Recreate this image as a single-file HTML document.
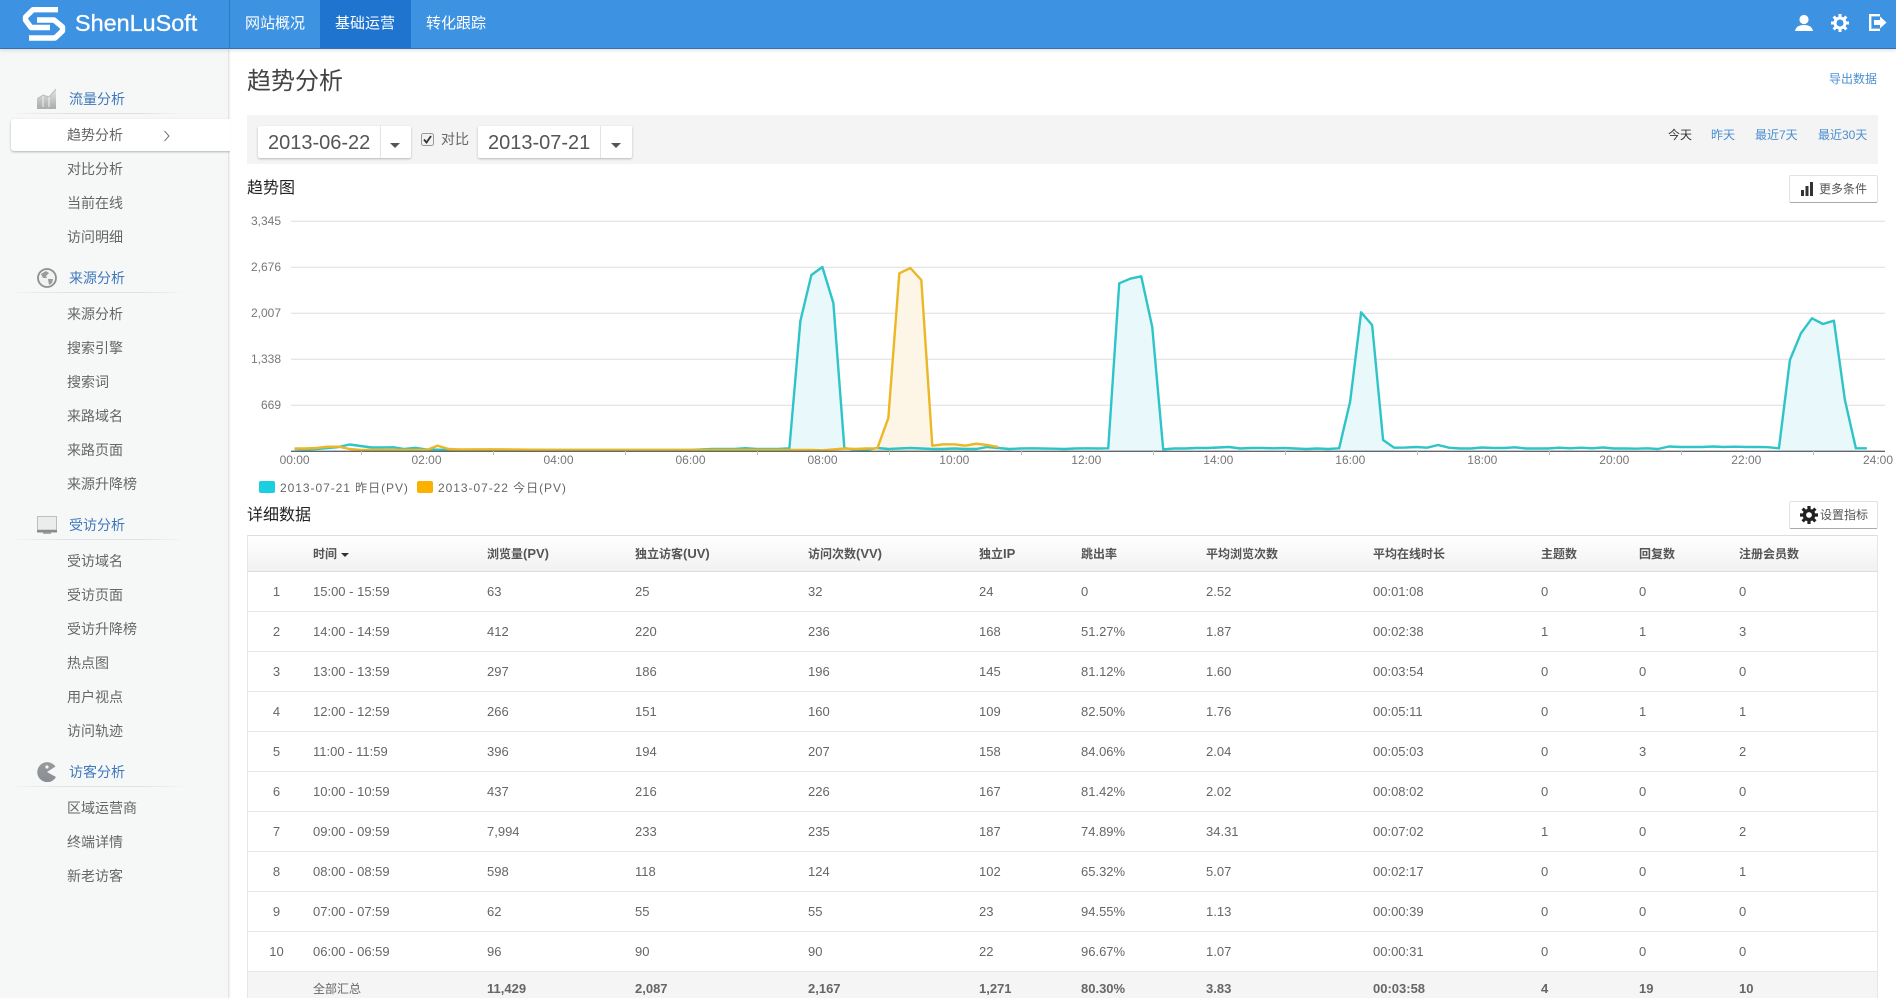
<!DOCTYPE html>
<html lang="zh-CN">
<head>
<meta charset="utf-8">
<title>趋势分析</title>
<style>
*{box-sizing:border-box}
html,body{margin:0;padding:0;width:1896px;height:998px;overflow:hidden;background:#fff}
body{position:relative;font-family:"Liberation Sans","Noto Sans CJK SC",sans-serif;color:#555;font-size:12px}
.t{position:absolute;white-space:nowrap;line-height:20px}
a{color:inherit;text-decoration:none}
#hd{position:absolute;left:0;top:0;width:1896px;height:49px;background:#3d92e2;border-bottom:1px solid #2f70b8;box-shadow:0 1px 4px rgba(0,0,0,.15);z-index:3}
#hd .sep{position:absolute;left:229px;top:0;width:1px;height:48px;background:#2f78c4}
#hd .act{position:absolute;left:320px;top:0;width:91px;height:48px;background:#1f74cf}
#hd .t{color:#fff;font-size:15px}
#side{position:absolute;left:0;top:49px;width:228px;height:949px;background:#f6f7f7;box-shadow:1px 0 2px rgba(0,0,0,.16)}
.sec{position:absolute;left:69px;font-size:14px;color:#3f78bd;line-height:20px;white-space:nowrap}
.ln{position:absolute;left:17px;width:165px;height:1px;background:linear-gradient(90deg,#f0f1f2,#dfe1e3 30%,#dfe1e3 75%,#f3f4f5)}
.it{position:absolute;left:67px;font-size:14px;color:#666;line-height:20px;white-space:nowrap}
#cur{position:absolute;left:11px;top:119px;width:219px;height:32px;background:#fff;border-radius:3px 0 0 3px;box-shadow:0 1px 2px rgba(0,0,0,.28);clip-path:inset(-3px 0 -3px -3px)}
.ic{position:absolute}
#bar{position:absolute;left:247px;top:115px;width:1631px;height:49px;background:#f4f4f4}
.dt{position:absolute;top:126px;height:32px;background:#fff;border-radius:2px;box-shadow:0 1px 2px rgba(0,0,0,.25);font-size:20px;color:#555;line-height:34px;padding-left:10px}
.dt i{position:absolute;top:0;width:1px;height:32px;background:#e4e4e4}
.dt b{position:absolute;top:17px;width:0;height:0;border-left:5px solid transparent;border-right:5px solid transparent;border-top:5px solid #555}
.blue{color:#4a8fd0}
.btn{position:absolute;left:1789px;width:89px;height:28px;background:#fff;border:1px solid #e2e2e2;border-bottom:1px solid #aaa;border-radius:2px}
table{position:absolute;left:247px;top:535px;width:1631px;border-collapse:separate;border-spacing:0;table-layout:fixed;font-size:13px;color:#666}
th{height:37px;padding:0;text-align:left;font-size:12px;font-weight:bold;color:#555;border-top:1px solid #ddd;border-bottom:1px solid #ddd;background:linear-gradient(#fff,#f1f1f1)}
th span{font-size:13px}
td{height:40px;padding:0;border-bottom:1px solid #e6e6e6}
tr>:first-child{border-left:1px solid #e6e6e6;text-align:center;padding-right:8px}
tr>:last-child{border-right:1px solid #e6e6e6}
tr.sum td{height:32px;background:#f5f5f5;font-weight:bold;border-bottom:0}
tr.sum td.c{font-size:12px;font-weight:normal}
.car{display:inline-block;width:0;height:0;border-left:4px solid transparent;border-right:4px solid transparent;border-top:4px solid #333;margin-left:4px;vertical-align:1px}
svg text{font-family:"Liberation Sans",sans-serif;font-size:12px;fill:#777}
</style>
</head>
<body>

<div id="hd">
  <svg class="ic" style="left:0;top:0" width="80" height="48" fill="none" stroke="#fff" stroke-width="5.4" stroke-linejoin="round">
    <path d="M58 9.7H33L25.5 17V20L31 27.5H50"/>
    <path d="M37 20H54L62.5 27V31L55 38H29"/>
  </svg>
  <div class="t" style="left:75px;top:11px;font-size:23.4px;line-height:24px;-webkit-text-stroke:.3px #fff">ShenLuSoft</div>
  <div class="sep"></div>
  <div class="act"></div>
  <div class="t" style="left:245px;top:14px">网站概况</div>
  <div class="t" style="left:335px;top:14px">基础运营</div>
  <div class="t" style="left:426px;top:14px">转化跟踪</div>
  <svg class="ic" style="left:1795px;top:14px" width="18" height="18" fill="#fff"><circle cx="9" cy="5.5" r="4.6"/><path d="M0 17C1 12 5 11 9 11S17 12 18 17Z"/></svg>
  <svg class="ic" style="left:1831px;top:14px" width="18" height="18"><circle cx="9" cy="9" r="5" fill="none" stroke="#fff" stroke-width="3"/><g stroke="#fff" stroke-width="3"><path d="M9 0V4M9 14V18M0 9H4M14 9H18M2.6 2.6L5.5 5.5M12.5 12.5L15.4 15.4M2.6 15.4L5.5 12.5M12.5 5.5L15.4 2.6"/></g></svg>
  <svg class="ic" style="left:1869px;top:14px" width="18" height="17"><path d="M11 1.2H1.2V15.8H11" fill="none" stroke="#fff" stroke-width="2.4"/><path d="M5 6H11V2.5L17.5 8.5L11 14.5V11H5Z" fill="#fff"/></svg>
</div>

<div id="side" style="top:49px"></div>
<div style="position:absolute;left:0;top:0;width:230px;height:998px;z-index:1">
  <svg class="ic" style="left:37px;top:88px" width="20" height="21">
    <defs><linearGradient id="g" x1="0" y1="0" x2="0" y2="1"><stop offset="0" stop-color="#e4e4e4"/><stop offset="1" stop-color="#b0b0b0"/></linearGradient></defs>
    <path d="M0 11L6 7L12 9L19 1V19H0Z" fill="url(#g)"/><path d="M0 11L6 7L12 9L19 1" fill="none" stroke="#bbb"/><path d="M0 20H19" stroke="#999" stroke-width="1.4"/><path d="M6 8V19M12 9V19" stroke="#f2f2f2"/>
  </svg>
  <div class="sec" style="top:89px">流量分析</div>
  <div class="ln" style="top:113px"></div>
  <div id="cur"></div>
  <div class="it" style="top:125px">趋势分析</div>
  <svg class="ic" style="left:163px;top:130px" width="8" height="12" fill="none" stroke="#777" stroke-width="1"><path d="M1.5 1L6 6L1.5 11"/></svg>
  <div class="it" style="top:159px">对比分析</div>
  <div class="it" style="top:193px">当前在线</div>
  <div class="it" style="top:227px">访问明细</div>

  <svg class="ic" style="left:37px;top:268px" width="20" height="20"><circle cx="10" cy="10" r="9" fill="#f1f1f1" stroke="#8f8f8f" stroke-width="1.8"/><path d="M4 6L9 3L12 5L9 8L10 10L6 10ZM11 11L16 11L15 15L12 17Z" fill="#9a9a9a"/></svg>
  <div class="sec" style="top:268px">来源分析</div>
  <div class="ln" style="top:292px"></div>
  <div class="it" style="top:304px">来源分析</div>
  <div class="it" style="top:338px">搜索引擎</div>
  <div class="it" style="top:372px">搜索词</div>
  <div class="it" style="top:406px">来路域名</div>
  <div class="it" style="top:440px">来路页面</div>
  <div class="it" style="top:474px">来源升降榜</div>

  <svg class="ic" style="left:37px;top:516px" width="20" height="19"><rect x="0.5" y="0.5" width="19" height="13.5" fill="#ececec" stroke="#bdbdbd"/><rect x="0" y="14" width="20" height="2.5" fill="#8c8c8c"/><rect x="6" y="16.5" width="8" height="1.5" fill="#aaa"/></svg>
  <div class="sec" style="top:515px">受访分析</div>
  <div class="ln" style="top:539px"></div>
  <div class="it" style="top:551px">受访域名</div>
  <div class="it" style="top:585px">受访页面</div>
  <div class="it" style="top:619px">受访升降榜</div>
  <div class="it" style="top:653px">热点图</div>
  <div class="it" style="top:687px">用户视点</div>
  <div class="it" style="top:721px">访问轨迹</div>

  <svg class="ic" style="left:37px;top:762px" width="20" height="20"><defs><linearGradient id="p" x1="0" y1="0" x2="0" y2="1"><stop offset="0" stop-color="#9a9a9a"/><stop offset="1" stop-color="#888e94"/></linearGradient></defs><path d="M10 10L18.5 4.5A10 10 0 1 0 19 15Z" fill="url(#p)"/><circle cx="10" cy="5" r="1.6" fill="#f6f7f8"/></svg>
  <div class="sec" style="top:762px">访客分析</div>
  <div class="ln" style="top:786px"></div>
  <div class="it" style="top:798px">区域运营商</div>
  <div class="it" style="top:832px">终端详情</div>
  <div class="it" style="top:866px">新老访客</div>
</div>

<div class="t" style="left:247px;top:66px;font-size:24px;line-height:32px;color:#444">趋势分析</div>
<a class="t blue" style="left:1829px;top:69px">导出数据</a>

<div id="bar"></div>
<div class="dt" style="left:258px;width:153px">2013-06-22<i style="left:122px"></i><b style="left:132px"></b></div>
<svg class="ic" style="left:421px;top:133px" width="13" height="13"><rect x="0.5" y="0.5" width="12" height="12" rx="2" fill="#f2f2f2" stroke="#999"/><path d="M3 6.5L5.5 9.5L10 3" fill="none" stroke="#333" stroke-width="1.8"/></svg>
<div class="t" style="left:441px;top:129px;font-size:14px;color:#666">对比</div>
<div class="dt" style="left:478px;width:154px">2013-07-21<i style="left:122px"></i><b style="left:133px"></b></div>
<div class="t" style="left:1668px;top:125px;color:#333">今天</div>
<a class="t blue" style="left:1711px;top:125px">昨天</a>
<a class="t blue" style="left:1755px;top:125px">最近7天</a>
<a class="t blue" style="left:1818px;top:125px">最近30天</a>

<div class="t" style="left:247px;top:179px;font-size:16px;color:#222">趋势图</div>
<div class="btn" style="top:175px"></div>
<svg class="ic" style="left:1800px;top:181px" width="14" height="16" fill="#333"><rect x="1" y="9" width="3" height="6"/><rect x="5.5" y="5" width="3" height="10"/><rect x="10" y="1" width="3" height="14"/></svg>
<div class="t" style="left:1819px;top:179px;color:#555">更多条件</div>

<svg class="ic" style="left:0;top:0" width="1896" height="998">
  <g stroke="#e6e6e6" stroke-width="1.4">
    <path d="M291 221.3H1885M291 267.3H1885M291 313.3H1885M291 359.3H1885M291 405.3H1885"/>
  </g>
  <g text-anchor="end">
    <text x="281" y="225">3,345</text><text x="281" y="271">2,676</text><text x="281" y="317">2,007</text><text x="281" y="363">1,338</text><text x="281" y="409">669</text>
  </g>
  <g transform="translate(294.6,0) scale(10.995,1)">
    <polygon fill="#e8f8fb" points="45,451 45,448.3 46,321 47,275 48,267 49,303 50,448 50,451"/>
    <polygon fill="#e8f8fb" points="74,451 74,448.3 75,283.3 76,278.7 77,276.3 78,326.7 79,449.3 79,451"/>
    <polygon fill="#e8f8fb" points="95,451 95,448.3 96,401.7 97,312.3 98,325 99,440 100,447.7 100,451"/>
    <polygon fill="#e8f8fb" points="135,451 135,448.3 136,360 137,333.3 138,318.3 139,324 140,320.7 141,400 142,448.3 142,451"/>
    <polygon fill="#fdf6e6" points="53,451 53,448.3 54,418 55,273.3 56,268 57,280 58,445.7 59,444.3 60,444.3 61,445.7 62,443.7 63,445 64,447 64,451"/>
    <polyline fill="none" stroke="#2ec4c8" stroke-width="2.4" vector-effect="non-scaling-stroke" stroke-linejoin="round" points="0,449 1,449.5 2,449 3,448 4,447 5,444.5 6,446 7,447.5 8,447.5 9,447.3 10,449 11,447.8 12,449.5 13,449.7 14,450 36,450 37,449.5 38,449 39,449 40,449 41,448.2 42,449 43,449 44,449 45,448.3 46,321 47,275 48,267 49,303 50,448 51,450 52,450 53,448 54,449 55,448.5 56,448 57,448.5 58,449 59,449 60,448.5 61,449 62,449 63,447 64,448 65,449 66,448.5 67,448.3 68,448.5 69,448.7 70,449 71,448.5 72,448.3 73,448.5 74,448.3 75,283.3 76,278.7 77,276.3 78,326.7 79,449.3 80,448.5 81,448.5 82,448 83,448 84,447.5 85,447 86,448.5 87,448 88,448 89,448.3 90,448 91,448.5 92,449 93,448.5 94,449 95,448.3 96,401.7 97,312.3 98,325 99,440 100,447.7 101,447.6 102,447 103,447.7 104,445 105,447.7 106,448.5 107,448.5 108,447.5 109,448 110,448 111,447.3 112,448.5 113,448.5 114,448.5 115,447.7 116,448.3 117,447.7 118,448.3 119,447.5 120,448.5 121,448.5 122,448.7 123,448.3 124,449 125,446.5 126,447 127,447 128,447 129,446.5 130,447 131,446.7 132,447 133,447 134,447.2 135,448.3 136,360 137,333.3 138,318.3 139,324 140,320.7 141,400 142,448.3 143,448.3"/>
    <polyline fill="none" stroke="#ecb725" stroke-width="2.4" vector-effect="non-scaling-stroke" stroke-linejoin="round" points="0,448.5 1,448.5 2,448 3,446.7 4,446.7 5,449 6,450 12,450 13,445.7 14,449 15,449.5 18,449.3 24,450 47,450 48,450.3 49,449.5 50,448.5 51,449 52,448.5 53,448.3 54,418 55,273.3 56,268 57,280 58,445.7 59,444.3 60,444.3 61,445.7 62,443.7 63,445 64,447"/>
  </g>
  <path d="M291 451.3H1885" stroke="#666" stroke-width="1.4"/>
  <path d="M361.5 451V455M493.5 451V455M625.5 451V455M757.5 451V455M889.5 451V455M1021.5 451V455M1153.5 451V455M1285.5 451V455M1417.5 451V455M1549.5 451V455M1681.5 451V455M1813.5 451V455" stroke="#bbb"/>
  <g text-anchor="middle">
    <text x="294.6" y="464">00:00</text><text x="426.5" y="464">02:00</text><text x="558.5" y="464">04:00</text><text x="690.5" y="464">06:00</text><text x="822.5" y="464">08:00</text><text x="954.3" y="464">10:00</text><text x="1086.3" y="464">12:00</text><text x="1218.3" y="464">14:00</text><text x="1350.3" y="464">16:00</text><text x="1482.3" y="464">18:00</text><text x="1614.3" y="464">20:00</text><text x="1746.3" y="464">22:00</text><text x="1878" y="464">24:00</text>
  </g>
  <rect x="259" y="481" width="16" height="12" rx="2" fill="#19cfe0"/>
  <rect x="417" y="481" width="16" height="12" rx="2" fill="#fcb100"/>
</svg>
<div class="t" style="left:280px;top:478px;color:#666;letter-spacing:.95px">2013-07-21 昨日(PV)</div>
<div class="t" style="left:438px;top:478px;color:#666;letter-spacing:.95px">2013-07-22 今日(PV)</div>

<div class="t" style="left:247px;top:506px;font-size:16px;color:#222">详细数据</div>
<div class="btn" style="top:501px"></div>
<svg class="ic" style="left:1800px;top:506px" width="18" height="18"><circle cx="9" cy="9" r="4.6" fill="none" stroke="#222" stroke-width="3.4"/><path d="M9 0V4M9 14V18M0 9H4M14 9H18M2.6 2.6L5.5 5.5M12.5 12.5L15.4 15.4M2.6 15.4L5.5 12.5M12.5 5.5L15.4 2.6" stroke="#222" stroke-width="3.2"/></svg>
<div class="t" style="left:1820px;top:505px;color:#555">设置指标</div>

<table>
<colgroup><col style="width:66px"><col style="width:174px"><col style="width:148px"><col style="width:173px"><col style="width:171px"><col style="width:102px"><col style="width:125px"><col style="width:167px"><col style="width:168px"><col style="width:98px"><col style="width:100px"><col style="width:139px"></colgroup>
<tr><th></th><th>时间<i class="car"></i></th><th>浏览量<span>(PV)</span></th><th>独立访客<span>(UV)</span></th><th>访问次数<span>(VV)</span></th><th>独立<span>IP</span></th><th>跳出率</th><th>平均浏览次数</th><th>平均在线时长</th><th>主题数</th><th>回复数</th><th>注册会员数</th></tr>
<tr><td>1</td><td>15:00 - 15:59</td><td>63</td><td>25</td><td>32</td><td>24</td><td>0</td><td>2.52</td><td>00:01:08</td><td>0</td><td>0</td><td>0</td></tr>
<tr><td>2</td><td>14:00 - 14:59</td><td>412</td><td>220</td><td>236</td><td>168</td><td>51.27%</td><td>1.87</td><td>00:02:38</td><td>1</td><td>1</td><td>3</td></tr>
<tr><td>3</td><td>13:00 - 13:59</td><td>297</td><td>186</td><td>196</td><td>145</td><td>81.12%</td><td>1.60</td><td>00:03:54</td><td>0</td><td>0</td><td>0</td></tr>
<tr><td>4</td><td>12:00 - 12:59</td><td>266</td><td>151</td><td>160</td><td>109</td><td>82.50%</td><td>1.76</td><td>00:05:11</td><td>0</td><td>1</td><td>1</td></tr>
<tr><td>5</td><td>11:00 - 11:59</td><td>396</td><td>194</td><td>207</td><td>158</td><td>84.06%</td><td>2.04</td><td>00:05:03</td><td>0</td><td>3</td><td>2</td></tr>
<tr><td>6</td><td>10:00 - 10:59</td><td>437</td><td>216</td><td>226</td><td>167</td><td>81.42%</td><td>2.02</td><td>00:08:02</td><td>0</td><td>0</td><td>0</td></tr>
<tr><td>7</td><td>09:00 - 09:59</td><td>7,994</td><td>233</td><td>235</td><td>187</td><td>74.89%</td><td>34.31</td><td>00:07:02</td><td>1</td><td>0</td><td>2</td></tr>
<tr><td>8</td><td>08:00 - 08:59</td><td>598</td><td>118</td><td>124</td><td>102</td><td>65.32%</td><td>5.07</td><td>00:02:17</td><td>0</td><td>0</td><td>1</td></tr>
<tr><td>9</td><td>07:00 - 07:59</td><td>62</td><td>55</td><td>55</td><td>23</td><td>94.55%</td><td>1.13</td><td>00:00:39</td><td>0</td><td>0</td><td>0</td></tr>
<tr><td>10</td><td>06:00 - 06:59</td><td>96</td><td>90</td><td>90</td><td>22</td><td>96.67%</td><td>1.07</td><td>00:00:31</td><td>0</td><td>0</td><td>0</td></tr>
<tr class="sum"><td></td><td class="c">全部汇总</td><td>11,429</td><td>2,087</td><td>2,167</td><td>1,271</td><td>80.30%</td><td>3.83</td><td>00:03:58</td><td>4</td><td>19</td><td>10</td></tr>
</table>
</body>
</html>
